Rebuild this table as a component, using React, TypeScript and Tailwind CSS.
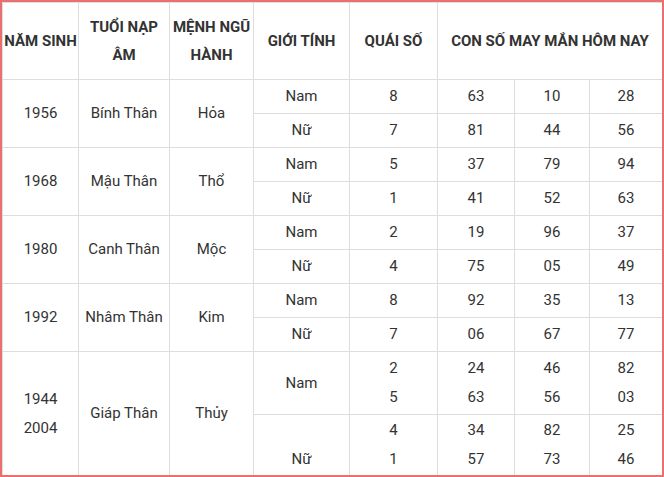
const rows = [
  { year: ['1956'], tuoi: 'Bính Thân', menh: 'Hỏa', nam: { q: ['8'], n: [['63', '10', '28']] }, nu: { q: ['7'], n: [['81', '44', '56']] } },
  { year: ['1968'], tuoi: 'Mậu Thân', menh: 'Thổ', nam: { q: ['5'], n: [['37', '79', '94']] }, nu: { q: ['1'], n: [['41', '52', '63']] } },
  { year: ['1980'], tuoi: 'Canh Thân', menh: 'Mộc', nam: { q: ['2'], n: [['19', '96', '37']] }, nu: { q: ['4'], n: [['75', '05', '49']] } },
  { year: ['1992'], tuoi: 'Nhâm Thân', menh: 'Kim', nam: { q: ['8'], n: [['92', '35', '13']] }, nu: { q: ['7'], n: [['06', '67', '77']] } },
  {
    year: ['1944', '2004'],
    tuoi: 'Giáp Thân',
    menh: 'Thủy',
    nam: { q: ['2', '5'], n: [['24', '46', '82'], ['63', '56', '03']] },
    nu: { q: ['4', '1'], n: [['34', '82', '25'], ['57', '73', '46']] },
  },
];

const td = 'border border-[#dddddd] text-center align-middle p-0';

function Lines({ items }: { items: string[] }) {
  if (items.length === 1) return <>{items[0]}</>;
  return (
    <div className="leading-[29px]">
      {items.map((t, i) => (
        <div key={i}>{t || '\u00a0'}</div>
      ))}
    </div>
  );
}

export default function App() {
  return (
    <div
      className="w-[664px] h-[477px] overflow-hidden bg-white border-2 border-[#ea6f6f] text-[15px] text-[#333333]"
      style={{ fontFamily: 'Roboto, "Noto Sans", sans-serif' }}
    >
      <table className="table-fixed border-collapse w-[660px]">
        <colgroup>
          <col className="w-[76px]" />
          <col className="w-[91px]" />
          <col className="w-[84px]" />
          <col className="w-[96px]" />
          <col className="w-[88px]" />
          <col className="w-[77px]" />
          <col className="w-[75px]" />
          <col className="w-[73px]" />
        </colgroup>
        <thead>
          <tr className="h-[77px] font-bold uppercase leading-[28px]">
            <th className={td}>Năm sinh</th>
            <th className={td}>
              Tuổi nạp
              <br />
              âm
            </th>
            <th className={td}>
              Mệnh ngũ
              <br />
              hành
            </th>
            <th className={td}>Giới tính</th>
            <th className={td}>Quái số</th>
            <th className={td} colSpan={3}>
              Con số may mắn hôm nay
            </th>
          </tr>
        </thead>
        <tbody>
          {rows.map((r) => {
            const tall = r.year.length > 1;
            return [r.nam, r.nu].map((g, gi) => (
              <tr key={r.tuoi + gi} className={tall ? (gi === 0 ? 'h-[63px]' : 'h-[61px]') : 'h-[34px]'}>
                {gi === 0 && (
                  <>
                    <td className={td} rowSpan={2}>
                      <Lines items={r.year} />
                    </td>
                    <td className={td} rowSpan={2}>
                      {r.tuoi}
                    </td>
                    <td className={td} rowSpan={2}>
                      {r.menh}
                    </td>
                  </>
                )}
                <td className={td}>
                  {tall && gi === 1 ? <Lines items={['', 'Nữ']} /> : gi === 0 ? 'Nam' : 'Nữ'}
                </td>
                <td className={td}>
                  <Lines items={g.q} />
                </td>
                {[0, 1, 2].map((c) => (
                  <td key={c} className={td}>
                    <Lines items={g.n.map((line) => line[c])} />
                  </td>
                ))}
              </tr>
            ));
          })}
        </tbody>
      </table>
    </div>
  );
}
